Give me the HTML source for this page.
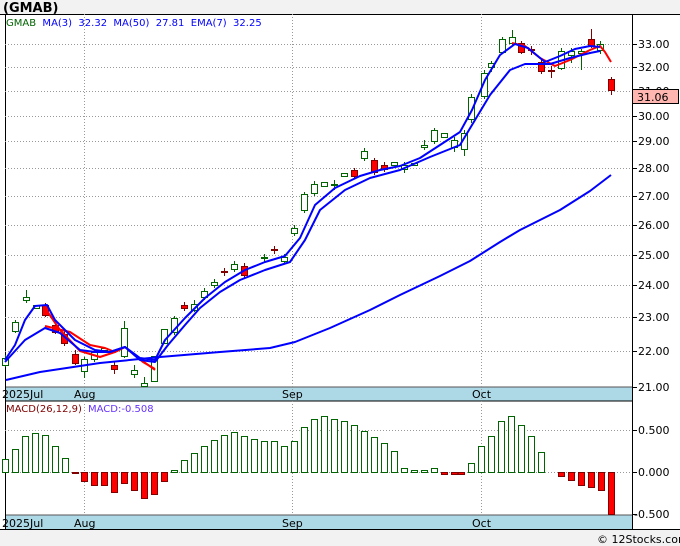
<!DOCTYPE html>
<html><head><meta charset="utf-8"><style>
html,body{margin:0;padding:0;background:#f2f2f2;}
body{width:680px;height:546px;position:relative;overflow:hidden;font-family:"DejaVu Sans",sans-serif;}
svg{position:absolute;left:0;top:0;}
</style></head><body>
<svg width="680" height="546" viewBox="0 0 680 546" font-family="DejaVu Sans, sans-serif">
<rect x="0" y="14" width="680" height="516" fill="#fff"/>
<text x="3" y="12" font-size="13" font-weight="bold" fill="#000">(GMAB)</text>
<rect x="5" y="387" width="627" height="14" fill="#add8e6"/>
<rect x="5" y="515" width="627" height="14" fill="#add8e6"/>
<line x1="5" y1="387" x2="632" y2="387" stroke="#555"/>
<line x1="5" y1="401" x2="632" y2="401" stroke="#000"/>
<line x1="5" y1="515" x2="632" y2="515" stroke="#555"/>
<line x1="0" y1="529.5" x2="680" y2="529.5" stroke="#000"/>
<line x1="0" y1="14.5" x2="680" y2="14.5" stroke="#000"/>
<line x1="5.5" y1="14" x2="5.5" y2="529" stroke="#000"/>
<line x1="632.5" y1="14" x2="632.5" y2="529" stroke="#000"/>
<g stroke="#999" stroke-dasharray="1,2">
<line x1="84.5" y1="14" x2="84.5" y2="515"/><line x1="292.5" y1="14" x2="292.5" y2="515"/><line x1="481.5" y1="14" x2="481.5" y2="515"/>
<line x1="5" y1="44.5" x2="632" y2="44.5"/><line x1="5" y1="67.5" x2="632" y2="67.5"/><line x1="5" y1="91.5" x2="632" y2="91.5"/><line x1="5" y1="116.5" x2="632" y2="116.5"/><line x1="5" y1="141.5" x2="632" y2="141.5"/><line x1="5" y1="168.5" x2="632" y2="168.5"/><line x1="5" y1="196.5" x2="632" y2="196.5"/><line x1="5" y1="225.5" x2="632" y2="225.5"/><line x1="5" y1="255.5" x2="632" y2="255.5"/><line x1="5" y1="285.5" x2="632" y2="285.5"/><line x1="5" y1="317.5" x2="632" y2="317.5"/><line x1="5" y1="351.5" x2="632" y2="351.5"/>
<line x1="5" y1="430.5" x2="632" y2="430.5"/><line x1="5" y1="472.5" x2="632" y2="472.5"/>
</g>
<g stroke="#000"><line x1="632" y1="44.5" x2="637" y2="44.5"/><line x1="632" y1="67.5" x2="637" y2="67.5"/><line x1="632" y1="91.5" x2="637" y2="91.5"/><line x1="632" y1="116.5" x2="637" y2="116.5"/><line x1="632" y1="141.5" x2="637" y2="141.5"/><line x1="632" y1="168.5" x2="637" y2="168.5"/><line x1="632" y1="196.5" x2="637" y2="196.5"/><line x1="632" y1="225.5" x2="637" y2="225.5"/><line x1="632" y1="255.5" x2="637" y2="255.5"/><line x1="632" y1="285.5" x2="637" y2="285.5"/><line x1="632" y1="317.5" x2="637" y2="317.5"/><line x1="632" y1="351.5" x2="637" y2="351.5"/><line x1="632" y1="387.5" x2="637" y2="387.5"/><line x1="632" y1="430.5" x2="637" y2="430.5"/><line x1="632" y1="472.5" x2="637" y2="472.5"/><line x1="632" y1="514.5" x2="637" y2="514.5"/></g>
<g font-size="11" fill="#000">
<text x="638" y="48">33.00</text><text x="638" y="71">32.00</text><text x="638" y="95">31.00</text><text x="638" y="120">30.00</text><text x="638" y="145">29.00</text><text x="638" y="172">28.00</text><text x="638" y="200">27.00</text><text x="638" y="229">26.00</text><text x="638" y="259">25.00</text><text x="638" y="289">24.00</text><text x="638" y="321">23.00</text><text x="638" y="355">22.00</text><text x="638" y="391">21.00</text>
<text x="638" y="434">0.500</text><text x="638" y="476">0.000</text><text x="634" y="518">-0.500</text>
</g>
<rect x="632.5" y="89.5" width="46" height="14" fill="#ffb6b0" stroke="#000"/>
<text x="637" y="101" font-size="11">31.06</text>
<g font-size="11" fill="#000">
<text x="2" y="398">2025Jul</text><text x="74" y="398">Aug</text><text x="282" y="398">Sep</text><text x="472" y="398">Oct</text>
<text x="2" y="527">2025Jul</text><text x="74" y="527">Aug</text><text x="282" y="527">Sep</text><text x="472" y="527">Oct</text>
</g>
<text x="6" y="26" font-size="10" xml:space="preserve"><tspan fill="#006400">GMAB</tspan><tspan fill="#0000ff">  MA(3)  32.32  MA(50)  27.81  EMA(7)  32.25</tspan></text>
<text x="6" y="412" font-size="10" fill="#800000">MACD(26,12,9)</text>
<text x="88" y="412" font-size="10" fill="#6633ff">MACD:-0.508</text>
<text x="597" y="543" font-size="11" fill="#000">© 12Stocks.com</text>
<g stroke-width="1">
<g stroke="#006400" fill="#fff">
<line x1="5.5" y1="355" x2="5.5" y2="367"/><rect x="2.5" y="358.5" width="6" height="7"/>
<line x1="15.5" y1="320" x2="15.5" y2="333"/><rect x="12.5" y="322.5" width="6" height="9"/>
<line x1="26.5" y1="290" x2="26.5" y2="303"/><rect x="23.5" y="297.5" width="6" height="3"/>
<rect x="33.5" y="305.5" width="6" height="3"/>
<line x1="84.5" y1="357" x2="84.5" y2="378"/><rect x="81.5" y="359.5" width="6" height="12"/>
<line x1="94.5" y1="349" x2="94.5" y2="362"/><rect x="91.5" y="352.5" width="6" height="7"/>
<rect x="101.5" y="348.5" width="6" height="2"/>
<line x1="124.5" y1="321" x2="124.5" y2="358"/><rect x="121.5" y="328.5" width="6" height="28"/>
<line x1="134.5" y1="365" x2="134.5" y2="378"/><rect x="131.5" y="370.5" width="6" height="4"/>
<line x1="144.5" y1="377" x2="144.5" y2="387"/><rect x="141.5" y="383.5" width="6" height="3"/>
<rect x="151.5" y="356.5" width="6" height="25"/>
<rect x="161.5" y="329.5" width="6" height="14"/>
<line x1="174.5" y1="316" x2="174.5" y2="335"/><rect x="171.5" y="318.5" width="6" height="14"/>
<line x1="194.5" y1="300" x2="194.5" y2="312"/><rect x="191.5" y="304.5" width="6" height="6"/>
<line x1="204.5" y1="288" x2="204.5" y2="300"/><rect x="201.5" y="291.5" width="6" height="6"/>
<line x1="214.5" y1="279" x2="214.5" y2="288"/><rect x="211.5" y="282.5" width="6" height="3"/>
<line x1="234.5" y1="261" x2="234.5" y2="272"/><rect x="231.5" y="264.5" width="6" height="5"/>
<line x1="264.5" y1="254" x2="264.5" y2="262"/><rect x="261.5" y="257.5" width="6" height="1"/>
<line x1="284.5" y1="254" x2="284.5" y2="263"/><rect x="281.5" y="257.5" width="6" height="4"/>
<line x1="294.5" y1="225" x2="294.5" y2="236"/><rect x="291.5" y="228.5" width="6" height="5"/>
<line x1="304.5" y1="192" x2="304.5" y2="213"/><rect x="301.5" y="194.5" width="6" height="16"/>
<line x1="314.5" y1="181" x2="314.5" y2="196"/><rect x="311.5" y="184.5" width="6" height="9"/>
<rect x="321.5" y="182.5" width="6" height="4"/>
<line x1="334.5" y1="180" x2="334.5" y2="190"/><rect x="331.5" y="184.5" width="6" height="1"/>
<rect x="341.5" y="173.5" width="6" height="3"/>
<line x1="364.5" y1="148" x2="364.5" y2="161"/><rect x="361.5" y="151.5" width="6" height="7"/>
<rect x="391.5" y="162.5" width="6" height="3"/>
<line x1="404.5" y1="162" x2="404.5" y2="173"/><rect x="401.5" y="165.5" width="6" height="4"/>
<rect x="411.5" y="163.5" width="6" height="2"/>
<line x1="424.5" y1="140" x2="424.5" y2="150"/><rect x="421.5" y="145.5" width="6" height="2"/>
<line x1="434.5" y1="128" x2="434.5" y2="144"/><rect x="431.5" y="130.5" width="6" height="11"/>
<rect x="441.5" y="133.5" width="6" height="4"/>
<line x1="454.5" y1="137" x2="454.5" y2="152"/><rect x="451.5" y="140.5" width="6" height="7"/>
<line x1="464.5" y1="130" x2="464.5" y2="156"/><rect x="461.5" y="133.5" width="6" height="16"/>
<line x1="471.5" y1="94" x2="471.5" y2="123"/><rect x="468.5" y="97.5" width="6" height="22"/>
<line x1="484.5" y1="70" x2="484.5" y2="99"/><rect x="481.5" y="73.5" width="6" height="23"/>
<line x1="491.5" y1="61" x2="491.5" y2="72"/><rect x="488.5" y="63.5" width="6" height="4"/>
<line x1="502.5" y1="37" x2="502.5" y2="54"/><rect x="499.5" y="39.5" width="6" height="13"/>
<line x1="512.5" y1="30" x2="512.5" y2="46"/><rect x="509.5" y="37.5" width="6" height="6"/>
<line x1="561.5" y1="48" x2="561.5" y2="70"/><rect x="558.5" y="51.5" width="6" height="17"/>
<line x1="571.5" y1="48" x2="571.5" y2="63"/><rect x="568.5" y="51.5" width="6" height="4"/>
<line x1="581.5" y1="49" x2="581.5" y2="70"/><rect x="578.5" y="51.5" width="6" height="2"/>
<line x1="600.5" y1="41" x2="600.5" y2="54"/><rect x="597.5" y="44.5" width="6" height="6"/>
</g>
<g stroke="#800000" fill="#ff0000">
<line x1="45.5" y1="303" x2="45.5" y2="317"/><rect x="42.5" y="305.5" width="6" height="10"/>
<line x1="55.5" y1="323" x2="55.5" y2="334"/><rect x="52.5" y="325.5" width="6" height="7"/>
<line x1="64.5" y1="330" x2="64.5" y2="346"/><rect x="61.5" y="334.5" width="6" height="9"/>
<line x1="75.5" y1="350" x2="75.5" y2="365"/><rect x="72.5" y="354.5" width="6" height="9"/>
<line x1="114.5" y1="362" x2="114.5" y2="374"/><rect x="111.5" y="365.5" width="6" height="4"/>
<line x1="184.5" y1="302" x2="184.5" y2="311"/><rect x="181.5" y="305.5" width="6" height="3"/>
<line x1="224.5" y1="268" x2="224.5" y2="276"/><rect x="221.5" y="271.5" width="6" height="1"/>
<line x1="244.5" y1="263" x2="244.5" y2="278"/><rect x="241.5" y="266.5" width="6" height="9"/>
<line x1="274.5" y1="246" x2="274.5" y2="254"/><rect x="271.5" y="249.5" width="6" height="1"/>
<line x1="354.5" y1="168" x2="354.5" y2="178"/><rect x="351.5" y="170.5" width="6" height="6"/>
<line x1="374.5" y1="158" x2="374.5" y2="175"/><rect x="371.5" y="160.5" width="6" height="12"/>
<line x1="384.5" y1="162" x2="384.5" y2="172"/><rect x="381.5" y="165.5" width="6" height="4"/>
<line x1="521.5" y1="41" x2="521.5" y2="54"/><rect x="518.5" y="43.5" width="6" height="9"/>
<line x1="531.5" y1="46" x2="531.5" y2="55"/><rect x="528.5" y="49.5" width="6" height="1"/>
<line x1="541.5" y1="60" x2="541.5" y2="74"/><rect x="538.5" y="62.5" width="6" height="9"/>
<line x1="551.5" y1="66" x2="551.5" y2="78"/><rect x="548.5" y="70.5" width="6" height="1"/>
<line x1="591.5" y1="29" x2="591.5" y2="48"/><rect x="588.5" y="39.5" width="6" height="7"/>
<line x1="611.5" y1="77" x2="611.5" y2="95"/><rect x="608.5" y="79.5" width="6" height="11"/>
</g>
</g>
<g fill="none" stroke-width="2" stroke-linejoin="round">
<polyline stroke="#ff0000" points="45,308 60,330 80,351 100,357 115,352 125,347 140,359 155,370"/>
<polyline stroke="#ff0000" points="45,326 70,332 90,345 105,348 115,352 125,347 143,362 155,369"/>
<polyline stroke="#ff0000" points="512,43 525,46 540,58 555,66 570,60 590,50 600,46 605,52 611,62"/>
<polyline stroke="#0000ff" points="6,380 40,372 100,363 160,357 220,352 270,348 295,342 330,328 370,310 400,295 440,276 470,261 500,242 520,230 560,210 590,191 611,175"/>
<polyline stroke="#0000ff" points="5,360 15,345 25,320 35,306 47,305 55,320 75,340 95,350 110,352 125,347 140,358 155,360 165,340 185,318 205,298 225,282 245,270 265,262 285,256 300,238 315,205 335,188 360,176 380,170 400,166 420,158 440,145 460,132 472,110 485,80 500,55 515,44 528,48 545,62 560,56 575,49 590,46 600,47"/>
<polyline stroke="#0000ff" points="5,362 25,340 45,328 60,333 80,350 95,352 110,352 125,347 140,360 155,362 168,345 185,325 200,308 220,292 240,280 265,270 290,262 305,240 320,210 345,190 370,178 400,170 430,157 460,145 475,120 490,95 510,70 525,64 550,64 570,58 590,53 600,51"/>
</g>
<g stroke="#006400" fill="#fff">
<rect x="2.5" y="459.5" width="6" height="13"/><rect x="12.5" y="449.5" width="6" height="23"/><rect x="22.5" y="436.5" width="6" height="36"/><rect x="32.5" y="433.5" width="6" height="39"/><rect x="42.5" y="435.5" width="6" height="37"/><rect x="52.5" y="446.5" width="6" height="26"/><rect x="62.5" y="458.5" width="6" height="14"/>
<rect x="171.5" y="470.5" width="6" height="2"/><rect x="181.5" y="460.5" width="6" height="12"/><rect x="191.5" y="453.5" width="6" height="19"/><rect x="201.5" y="446.5" width="6" height="26"/><rect x="211.5" y="440.5" width="6" height="32"/><rect x="221.5" y="435.5" width="6" height="37"/><rect x="231.5" y="432.5" width="6" height="40"/><rect x="241.5" y="436.5" width="6" height="36"/><rect x="251.5" y="439.5" width="6" height="33"/><rect x="261.5" y="441.5" width="6" height="31"/><rect x="271.5" y="441.5" width="6" height="31"/><rect x="281.5" y="446.5" width="6" height="26"/><rect x="291.5" y="441.5" width="6" height="31"/><rect x="301.5" y="427.5" width="6" height="45"/><rect x="311.5" y="419.5" width="6" height="53"/><rect x="321.5" y="416.5" width="6" height="56"/><rect x="331.5" y="419.5" width="6" height="53"/><rect x="341.5" y="421.5" width="6" height="51"/><rect x="351.5" y="425.5" width="6" height="47"/><rect x="361.5" y="431.5" width="6" height="41"/><rect x="371.5" y="437.5" width="6" height="35"/><rect x="381.5" y="443.5" width="6" height="29"/><rect x="391.5" y="451.5" width="6" height="21"/><rect x="401.5" y="468.5" width="6" height="4"/><rect x="411.5" y="470.5" width="6" height="2"/><rect x="421.5" y="470.5" width="6" height="2"/><rect x="431.5" y="468.5" width="6" height="4"/>
<rect x="468.5" y="463.5" width="6" height="9"/><rect x="478.5" y="446.5" width="6" height="26"/><rect x="488.5" y="436.5" width="6" height="36"/><rect x="498.5" y="421.5" width="6" height="51"/><rect x="508.5" y="416.5" width="6" height="56"/><rect x="518.5" y="425.5" width="6" height="47"/><rect x="528.5" y="436.5" width="6" height="36"/><rect x="538.5" y="452.5" width="6" height="20"/>
</g>
<g stroke="#800000" fill="#ff0000">
<rect x="72.5" y="472.5" width="6" height="1"/>
<rect x="81.5" y="472.5" width="6" height="9"/><rect x="91.5" y="472.5" width="6" height="13"/><rect x="101.5" y="472.5" width="6" height="13"/><rect x="111.5" y="472.5" width="6" height="20"/><rect x="121.5" y="472.5" width="6" height="11"/><rect x="131.5" y="472.5" width="6" height="18"/><rect x="141.5" y="472.5" width="6" height="26"/><rect x="151.5" y="472.5" width="6" height="22"/><rect x="161.5" y="472.5" width="6" height="9"/>
<rect x="441.5" y="472.5" width="6" height="2"/><rect x="451.5" y="472.5" width="6" height="2"/><rect x="458.5" y="472.5" width="6" height="2"/>
<rect x="558.5" y="472.5" width="6" height="4"/><rect x="568.5" y="472.5" width="6" height="8"/><rect x="578.5" y="472.5" width="6" height="13"/><rect x="588.5" y="472.5" width="6" height="15"/><rect x="598.5" y="472.5" width="6" height="18"/><rect x="608.5" y="472.5" width="6" height="42"/>
</g>
</svg>
</body></html>
